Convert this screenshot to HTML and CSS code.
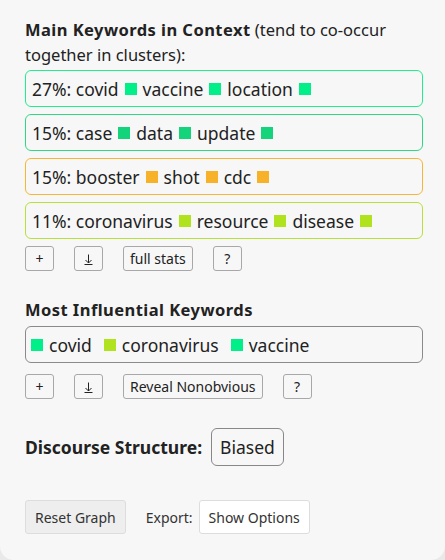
FILE: index.html
```html
<!DOCTYPE html>
<html>
<head>
<meta charset="utf-8">
<link rel="stylesheet" href="styles.css">
</head>
<body>
<div class="backdrop">
  <svg class="graph" width="40" height="200" viewBox="0 0 40 200">
    <line x1="6" y1="80" x2="40" y2="60" stroke="#f3ecd8" stroke-width="1"/>
    <line x1="0" y1="95" x2="12" y2="148" stroke="#f3ecd8" stroke-width="1"/>
    <circle cx="6" cy="80" r="5" fill="#f6eef6"/>
    <circle cx="0" cy="97" r="5" fill="#f6eef6"/>
    <circle cx="11" cy="148" r="5" fill="#f7f1e3"/>
  </svg>
  <div class="panel">
    <section class="section">
      <h2 class="title"><b>Main Keywords in Context</b> <span>(tend to co-occur</span> <span>together in clusters):</span></h2>
      <div class="cluster c-green">27%: covid <i class="sw"></i> vaccine <i class="sw"></i> location <i class="sw"></i></div>
      <div class="cluster c-teal">15%: case <i class="sw"></i> data <i class="sw"></i> update <i class="sw"></i></div>
      <div class="cluster c-orange">15%: booster <i class="sw"></i> shot <i class="sw"></i> cdc <i class="sw"></i></div>
      <div class="cluster c-lime">11%: coronavirus <i class="sw"></i> resource <i class="sw"></i> disease <i class="sw"></i></div>
      <div class="btnrow">
        <button class="sbtn sq">+</button>
        <button class="sbtn sq"><svg class="dl" width="9" height="11" viewBox="0 0 9 11"><path d="M4.5 0.5V9M1.5 6L4.5 9L7.5 6M0.5 10.5H8.5" fill="none" stroke="#222" stroke-width="1"/></svg></button>
        <button class="sbtn">full stats</button>
        <button class="sbtn sq">?</button>
      </div>
    </section>

    <section class="section infl">
      <h2 class="title"><b>Most Influential Keywords</b></h2>
      <div class="cluster c-gray"><span class="kw"><i class="sw g1"></i> covid</span><span class="kw"><i class="sw g4"></i> coronavirus</span><span class="kw"><i class="sw g1"></i> vaccine</span></div>
      <div class="btnrow">
        <button class="sbtn sq">+</button>
        <button class="sbtn sq"><svg class="dl" width="9" height="11" viewBox="0 0 9 11"><path d="M4.5 0.5V9M1.5 6L4.5 9L7.5 6M0.5 10.5H8.5" fill="none" stroke="#222" stroke-width="1"/></svg></button>
        <button class="sbtn">Reveal Nonobvious</button>
        <button class="sbtn sq">?</button>
      </div>
    </section>

    <section class="discourse">
      <b class="dlabel">Discourse Structure:</b>
      <span class="badge">Biased</span>
    </section>

    <section class="footer">
      <button class="fbtn reset">Reset Graph</button>
      <span class="export">Export:</span>
      <button class="fbtn show">Show Options</button>
    </section>
  </div>
</div>
</body>
</html>
```

FILE: styles.css
```css
html, body {
  margin: 0;
  padding: 0;
}
body {
  width: 445px;
  height: 560px;
  background: #e9e9e9;
  font-family: "Noto Sans", "Open Sans", sans-serif;
  color: #222;
  overflow: hidden;
}
.backdrop {
  position: relative;
  width: 445px;
  height: 560px;
}
.graph {
  position: absolute;
  left: 0;
  top: 0;
}
.panel {
  position: relative;
  box-sizing: border-box;
  width: 445px;
  height: 560px;
  background: rgba(248, 248, 248, 0.93);
  border-radius: 0 0 14px 14px;
  padding: 17px 22px 0 25px;
}
.title {
  margin: 0 -14px 3px 0;
  font-size: 16.5px;
  font-weight: normal;
  line-height: 25px;
  color: #222;
}
.title span {
  white-space: nowrap;
}
.title b {
  font-weight: 700;
  letter-spacing: 0.45px;
}
.cluster {
  box-sizing: border-box;
  height: 37px;
  border: 1px solid #888;
  border-radius: 6px;
  margin-bottom: 7px;
  padding: 0 6px;
  display: flex;
  align-items: center;
  gap: 6px;
  font-size: 17.5px;
  white-space: nowrap;
  background: rgba(255,255,255,0.1);
}
.sw {
  display: inline-block;
  width: 12px;
  height: 12px;
}
.c-green { border-color: #22ec92; }
.c-green .sw { background: #00ef88; }
.c-teal { border-color: #2ed887; }
.c-teal .sw { background: #14d47b; }
.c-orange { border-color: #f8b636; }
.c-orange .sw { background: #f7b22a; }
.c-lime { border-color: #b8e03a; }
.c-lime .sw { background: #b0e21e; }
.c-gray { border-color: #8a8a8a; gap: 12px; padding-left: 5px; }
.kw { display: inline-flex; align-items: center; gap: 6px; }
.g1 { background: #00ef88; }
.g4 { background: #b0e21e; }

.btnrow {
  display: flex;
  gap: 20px;
  margin-top: 4px;
}
.sbtn {
  box-sizing: border-box;
  height: 25px;
  min-width: 29px;
  padding: 0 6px;
  border: 1px solid #a8a8a8;
  border-radius: 3px;
  background: transparent;
  font-family: "Noto Sans", "Open Sans", sans-serif;
  font-size: 14px;
  color: #222;
  display: inline-flex;
  align-items: center;
  justify-content: center;
}
.sq { padding: 0; }
.dl { display: block; margin-top: 2px; }

.infl { margin-top: 23px; }
.infl .title { margin-bottom: 4px; padding-top: 3px; }
.infl .cluster { margin-bottom: 11px; }

.discourse {
  margin-top: 29px;
  display: flex;
  align-items: center;
  gap: 9px;
}
.dlabel {
  font-size: 17.5px;
  font-weight: 700;
}
.badge {
  box-sizing: border-box;
  height: 38px;
  padding: 0 8px;
  display: inline-flex;
  align-items: center;
  border: 1px solid #888;
  border-radius: 6px;
  font-size: 17.5px;
}

.footer {
  margin-top: 34px;
  display: flex;
  align-items: center;
}
.fbtn {
  box-sizing: border-box;
  height: 34px;
  padding: 0 9px;
  border: 1px solid #ddd;
  border-radius: 3px;
  font-family: "Noto Sans", "Open Sans", sans-serif;
  font-size: 14px;
  color: #333;
}
.reset { background: #eeeeee; }
.show { background: #fff; }
.export {
  font-size: 14px;
  color: #333;
  margin: 0 6px 0 20px;
}
```
